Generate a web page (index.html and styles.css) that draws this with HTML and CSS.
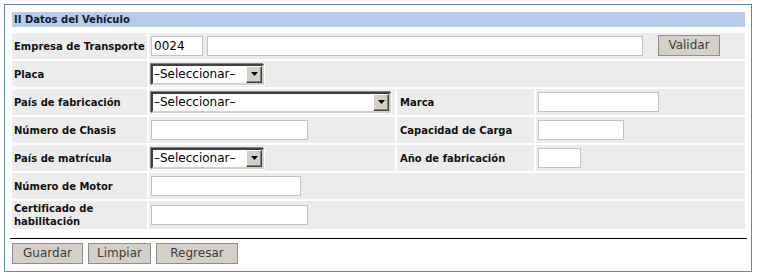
FILE: index.html
```html
<!DOCTYPE html>
<html lang="es">
<head>
<meta charset="utf-8">
<title>Datos del Vehículo</title>
<link rel="stylesheet" href="styles.css">
</head>
<body>
<div class="panel">
  <div class="header">II Datos del Vehículo</div>
  <div class="form">
    <div class="lbl">Empresa de Transporte</div>
    <div class="cell span3">
      <input class="txt w-code" type="text" value="0024">
      <input class="txt w-name" type="text">
      <button class="btn btn-validar" type="button">Validar</button>
    </div>

    <div class="lbl">Placa</div>
    <div class="cell span3">
      <span class="sel w-sel-s"><select><option>–Seleccionar–</option></select><span class="sel-btn"><svg width="7" height="4" viewBox="0 0 7 4"><path d="M0 0H7L3.5 4Z" fill="#000"/></svg></span></span>
    </div>

    <div class="lbl">País de fabricación</div>
    <div class="cell">
      <span class="sel w-sel-l"><select><option>–Seleccionar–</option></select><span class="sel-btn"><svg width="7" height="4" viewBox="0 0 7 4"><path d="M0 0H7L3.5 4Z" fill="#000"/></svg></span></span>
    </div>
    <div class="lbl lbl2">Marca</div>
    <div class="cell"><input class="txt w-marca" type="text"></div>

    <div class="lbl">Número de Chasis</div>
    <div class="cell"><input class="txt w-157" type="text"></div>
    <div class="lbl lbl2">Capacidad de Carga</div>
    <div class="cell"><input class="txt w-carga" type="text"></div>

    <div class="lbl">País de matrícula</div>
    <div class="cell">
      <span class="sel w-sel-s"><select><option>–Seleccionar–</option></select><span class="sel-btn"><svg width="7" height="4" viewBox="0 0 7 4"><path d="M0 0H7L3.5 4Z" fill="#000"/></svg></span></span>
    </div>
    <div class="lbl lbl2">Año de fabricación</div>
    <div class="cell"><input class="txt w-anio" type="text"></div>

    <div class="lbl">Número de Motor</div>
    <div class="cell span3"><input class="txt w-motor" type="text"></div>

    <div class="lbl">Certificado de<br>habilitación</div>
    <div class="cell span3"><input class="txt w-157" type="text"></div>
  </div>
  <div class="rule"></div>
  <div class="actions">
    <button class="btn w-guardar" type="button">Guardar</button>
    <button class="btn w-limpiar" type="button">Limpiar</button>
    <button class="btn w-regresar" type="button">Regresar</button>
  </div>
</div>
</body>
</html>
```

FILE: styles.css
```css
html, body {
  margin: 0;
  padding: 0;
  background: #ffffff;
}

body {
  padding: 4px;
  font-family: "DejaVu Sans", Verdana, sans-serif;
}

.panel {
  width: 733px;
  border: 1px solid #6089a2;
  padding: 7px 6px 7px 7px;
  background: #ffffff;
}

.header {
  height: 15px;
  line-height: 15px;
  background: #b6cbe8;
  font-size: 10px;
  font-weight: bold;
  color: #111a2a;
  padding-left: 2px;
  margin-bottom: 6px;
}

.form {
  display: grid;
  grid-template-columns: 135px 246px 137px 209px;
  grid-template-rows: 26px 26px 26px 26px 26px 26px 28px;
  gap: 2px;
}

.lbl,
.cell {
  background: #ececec;
  display: flex;
  align-items: center;
}

.lbl {
  padding-left: 2px;
  font-size: 10px;
  font-weight: bold;
  color: #111111;
  line-height: 13px;
}

.lbl2 {
  padding-left: 3px;
}

.cell {
  padding-left: 2px;
}

.span3 {
  grid-column: span 3;
}

.txt {
  box-sizing: border-box;
  height: 20px;
  margin: 0;
  padding: 0 2px;
  border: 1px solid #c3c3c3;
  background: #ffffff;
  font-family: "DejaVu Sans", sans-serif;
  font-size: 12px;
  color: #000000;
  outline: none;
}

.w-code { width: 52px; }
.w-name { width: 436px; margin-left: 4px; }
.w-marca { width: 121px; }
.w-157 { width: 157px; }
.w-carga { width: 86px; }
.w-anio { width: 43px; }
.w-motor { width: 150px; }

.btn {
  box-sizing: border-box;
  height: 21px;
  margin: 0;
  padding: 0;
  background: #d4d0c8;
  border: 1px solid #8e8e8e;
  font-family: "DejaVu Sans", sans-serif;
  font-size: 12px;
  color: #3c3c3c;
  line-height: 19px;
  text-align: center;
}

.btn-validar {
  width: 62px;
  margin-left: 15px;
  margin-top: -1px;
}

.sel {
  box-sizing: border-box;
  display: inline-flex;
  align-items: stretch;
  height: 21px;
  border-style: solid;
  border-width: 2px;
  border-color: #404040 #d4d0c8 #d4d0c8 #404040;
  box-shadow: -1px -1px 0 #808080, 1px 1px 0 #ffffff;
  background: #ffffff;
}

.sel select {
  flex: 1;
  min-width: 0;
  -webkit-appearance: none;
  appearance: none;
  border: none;
  background: transparent;
  margin: 0;
  padding: 0 0 0 1px;
  font-family: "DejaVu Sans", sans-serif;
  font-size: 12px;
  color: #000000;
  outline: none;
}

.sel-btn {
  box-sizing: border-box;
  width: 16px;
  display: flex;
  align-items: center;
  justify-content: center;
  background: #d4d0c8;
  border-style: solid;
  border-width: 1px;
  border-color: #ffffff #404040 #404040 #ffffff;
  box-shadow: inset -1px -1px 0 #808080;
}

.w-sel-s { width: 113px; }
.w-sel-l { width: 240px; }

.rule {
  height: 1px;
  background: #000000;
  margin: 9px -2px 4px -2px;
}

.actions {
  display: flex;
  gap: 5px;
}

.w-guardar { width: 71px; }
.w-limpiar { width: 63px; }
.w-regresar { width: 82px; }
```
